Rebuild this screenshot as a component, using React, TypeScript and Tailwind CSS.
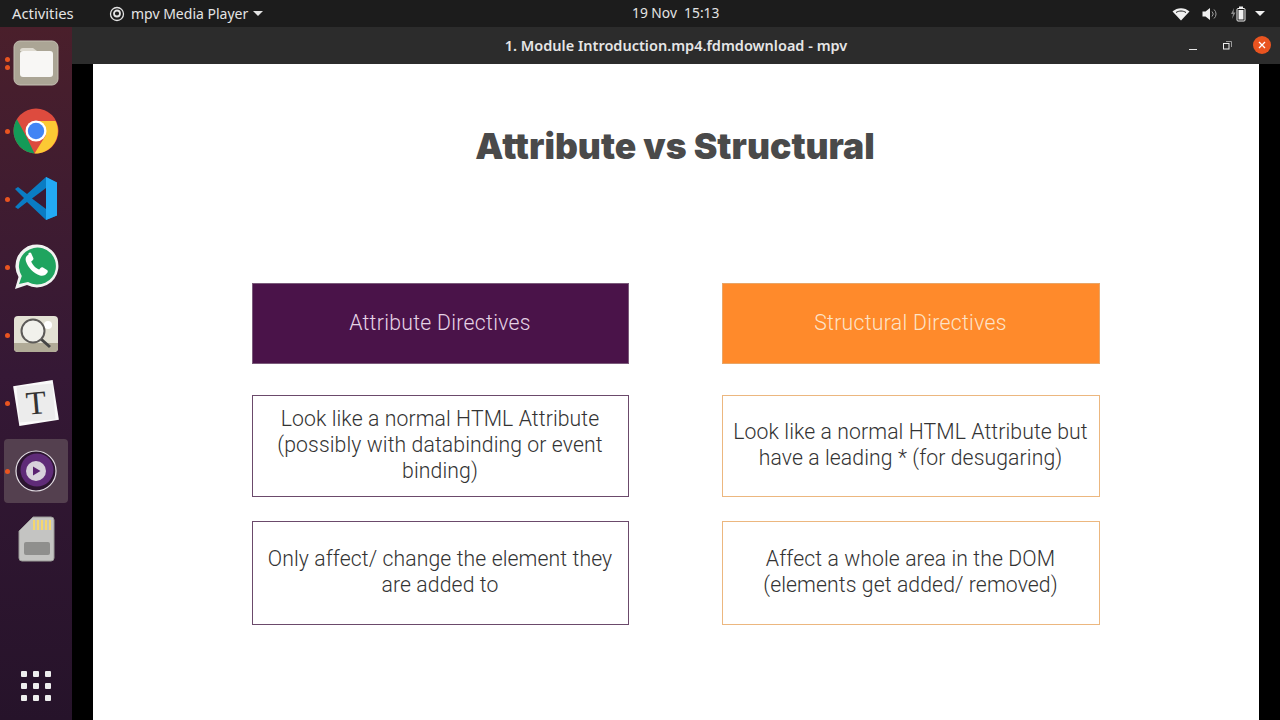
import { ReactNode } from 'react';

const FilesIcon = () => (
  <svg width="46" height="46" viewBox="0 0 46 46">
    <rect x="1" y="1" width="44" height="44" rx="6" fill="#aba595" stroke="#c4bfb2" />
    <path d="M7 11a3 3 0 0 1 3-3h10l4 3H7z" fill="#dedad0" />
    <path d="M7 14a3 3 0 0 1 3-3h27a3 3 0 0 1 3 3v20a3 3 0 0 1-3 3H10a3 3 0 0 1-3-3z" fill="#f8f7f5" />
  </svg>
);

const ChromeIcon = () => (
  <svg width="46" height="46" viewBox="0 0 46 46">
    <circle cx="23" cy="23" r="22.500" fill="#dd4b3e" />
    <path d="M4 11.500L14 30l7.500 15.400A22.500 22.500 0 0 1 3.500 11.800z" fill="#149b58" />
    <path d="M23 13h19.500A22.500 22.500 0 0 1 21.500 45.500L33 27z" fill="#fcc934" />
    <circle cx="23" cy="23" r="10.500" fill="#fff" />
    <circle cx="23" cy="23" r="8.200" fill="#4285f4" />
  </svg>
);

const VscodeIcon = () => (
  <svg width="46" height="46" viewBox="0 0 46 46">
    <path d="M33 1l11 5.500v33L33 44 14 26 5 33l-3-2 9-9-9-9 3-2 9 7z" fill="#0a7cc4" />
    <path d="M33 1l11 5.500v33L33 44z" fill="#23a9f4" />
    <path d="M33 12L19 22.500 33 33z" fill="#3a1a35" />
  </svg>
);

const WhatsappIcon = () => (
  <svg width="46" height="46" viewBox="0 0 46 46">
    <path d="M2 45l3.500-12A21.500 21.500 0 1 1 14 41z" fill="#f1f3f1" />
    <path d="M6 40l2.800-8A18.500 18.500 0 1 1 15 38z" fill="#1fa45f" />
    <path d="M15.500 10.500c-2.500 1.500-3.500 4-2.500 7 2 6 7.500 12 14 14 3 1 6-.5 7.500-3 .5-1 .3-2-.5-2.500l-4-2.500c-1-.5-1.800-.3-2.500.5l-1.300 1.500c-3.200-1-6.700-4.500-8-8l1.500-1.200c.8-.7 1-1.500.5-2.500l-2-4.500c-.5-.8-1.500-1-2.700 0z" fill="#fff" />
  </svg>
);

const ViewerIcon = () => (
  <svg width="46" height="46" viewBox="0 0 46 46">
    <rect x="1" y="4" width="44" height="36" rx="4" fill="#e3e1d4" />
    <path d="M1 31h44v5a4 4 0 0 1-4 4H5a4 4 0 0 1-4-4z" fill="#b1ab97" />
    <circle cx="35" cy="13" r="4" fill="#fff" />
    <circle cx="20" cy="19" r="11.500" fill="#f1f1ec" stroke="#5c5a58" strokeWidth="2" />
    <path d="M28.500 27.500L37 35" stroke="#454545" strokeWidth="3" />
  </svg>
);

const TyporaIcon = () => (
  <div className="relative w-[40px] h-[40px]">
    <div className="absolute inset-0 bg-[#fafafa] rotate-[-9deg]" />
    <div className="absolute inset-[2px] bg-[#ececec] rotate-[-5deg] flex items-center justify-center font-['Liberation_Serif',serif] text-[33px] leading-none text-[#333]">
      T
    </div>
  </div>
);

const MpvIcon = ({ size = 42 }: { size?: number }) => (
  <svg width={size} height={size} viewBox="0 0 42 42">
    <circle cx="21" cy="21" r="20" fill="#2c1630" stroke="#e2dde3" strokeWidth="1.200" />
    <circle cx="22" cy="20" r="16.500" fill="#5f2b78" />
    <circle cx="21" cy="21" r="10" fill="#d8d2dc" />
    <path d="M18 16.500l7.500 4.500-7.500 4.500z" fill="#5a2270" />
  </svg>
);

const SdCardIcon = () => (
  <svg width="38" height="46" viewBox="0 0 38 46">
    <path d="M16 1h18a3 3 0 0 1 3 3v38a3 3 0 0 1-3 3H5a3 3 0 0 1-3-3V15z" fill="#c4c4c2" stroke="#9b9b98" />
    <path d="M16 4h2v10h-2zm4 0h2v10h-2zm4 0h2v10h-2zm4 0h2v10h-2zm4 0h2v10h-2z" fill="#f5d76e" />
    <rect x="7" y="26" width="26" height="13" rx="2" fill="#8f8f8d" />
  </svg>
);

const dockItems: { icon: ReactNode; dots: number; active?: boolean }[] = [
  { icon: <FilesIcon />, dots: 2 },
  { icon: <ChromeIcon />, dots: 1 },
  { icon: <VscodeIcon />, dots: 1 },
  { icon: <WhatsappIcon />, dots: 1 },
  { icon: <ViewerIcon />, dots: 1 },
  { icon: <TyporaIcon />, dots: 1 },
  { icon: <MpvIcon />, dots: 1, active: true },
  { icon: <SdCardIcon />, dots: 0 },
];

const TopBar = () => (
  <div className="h-[27px] shrink-0 bg-[#1c1c1c] text-[#e4e4e4] text-[14px] flex items-center font-['Noto_Sans',sans-serif] relative">
    <span className="ml-[12px] w-[97px] text-[14.800px]">Activities</span>
    <svg width="16" height="16" viewBox="0 0 16 16" className="mr-[6px]">
      <circle cx="8" cy="8" r="6.500" fill="none" stroke="#e4e4e4" strokeWidth="1.300" />
      <circle cx="8" cy="7.500" r="3" fill="none" stroke="#e4e4e4" strokeWidth="1.800" />
    </svg>
    <span>mpv Media Player</span>
    <span className="ml-[5px] w-0 h-0 border-x-[5px] border-x-transparent border-t-[5px] border-t-[#e4e4e4]" />
    <span className="absolute left-[632px] text-[13.800px]">19 Nov&nbsp; 15:13</span>
    <div className="ml-auto mr-[15px] flex items-center">
      <svg width="18" height="14" viewBox="0 0 18 14" className="mr-[12px]">
        <path d="M0.500 4.500C5 0 13 0 17.500 4.500L9 13.500z" fill="#f0f0f0" />
        <path d="M4 5.500c3-2 7-2 10 0" fill="none" stroke="#1c1c1c" strokeWidth="1" />
      </svg>
      <svg width="16" height="14" viewBox="0 0 16 14" className="mr-[12px]">
        <path d="M0.500 4.500h3L8 1v12L3.500 9.500h-3z" fill="#f0f0f0" />
        <path d="M10 4.500a3.500 3.500 0 0 1 0 5M12 2.500a6 6 0 0 1 0 9" fill="none" stroke="#a0a0a0" strokeWidth="1" />
      </svg>
      <svg width="16" height="16" viewBox="0 0 16 16" className="mr-[9px]">
        <path d="M4 2L1 8h2l-1 5 3.500-6.500h-2z" fill="#8a8a8a" />
        <rect x="7" y="2.500" width="8" height="12.500" rx="1" fill="none" stroke="#f0f0f0" />
        <rect x="9" y="0.500" width="4" height="2" fill="#f0f0f0" />
        <rect x="8.500" y="4" width="5" height="9.500" fill="#f0f0f0" />
      </svg>
      <span className="w-0 h-0 border-x-[5px] border-x-transparent border-t-[5px] border-t-[#f0f0f0]" />
    </div>
  </div>
);

const Dock = () => (
  <div className="w-[72px] shrink-0 flex flex-col items-center pt-[2px] bg-gradient-to-b from-[#4a1f2b] via-[#351835] to-[#26132a]">
    {dockItems.map((item, i) => (
      <div key={i} className="relative w-[72px] h-[68px] flex items-center justify-center">
        {item.active && <div className="absolute left-[4px] top-[2px] w-[64px] h-[64px] rounded-[4px] bg-[#54404f]" />}
        <div className="absolute left-[5px] top-0 h-full flex flex-col justify-center gap-[3px]">
          {Array.from({ length: item.dots }).map((_, d) => (
            <span key={d} className="block w-[5px] h-[5px] rounded-full bg-[#e95420]" />
          ))}
        </div>
        <div className="relative">{item.icon}</div>
      </div>
    ))}
    <div className="mt-auto mb-[19px] grid grid-cols-3 gap-[6px]">
      {Array.from({ length: 9 }).map((_, i) => (
        <span key={i} className="block w-[6px] h-[6px] rounded-[1px] bg-[#eeeeee]" />
      ))}
    </div>
  </div>
);

const TitleBar = () => (
  <div className="h-[37px] shrink-0 bg-[#2c2c2c] flex items-center relative font-['Noto_Sans',sans-serif] text-[#e6e6e6]">
    <span className="w-full text-center text-[14.500px] font-semibold">
      1. Module Introduction.mp4.fdmdownload - mpv
    </span>
    <div className="absolute right-[9px] top-[9px] flex items-center">
      <span className="block w-[8px] h-[1px] bg-[#e6e6e6] mt-[8px] mr-[26px]" />
      <svg width="9" height="9" viewBox="0 0 9 9" className="mr-[21px]">
        <rect x="0.500" y="2.500" width="5.500" height="5.500" fill="none" stroke="#eeeeee" />
        <path d="M3 .500h5.500V6" fill="none" stroke="#9a9a9a" />
      </svg>
      <div className="w-[18px] h-[18px] rounded-full bg-[#e95420] flex items-center justify-center">
        <svg width="8" height="8" viewBox="0 0 8 8">
          <path d="M1 1l6 6M7 1L1 7" stroke="#fff" strokeWidth="1.300" />
        </svg>
      </div>
    </div>
  </div>
);

const Box = ({ children, className }: { children: ReactNode; className: string }) => (
  <div className={`flex items-center justify-center text-center px-[8px] pb-[2px] ${className}`}>
    <p>{children}</p>
  </div>
);

const Slide = () => (
  <div className="flex-1 bg-black px-[21px] min-h-0">
    <div className="h-full bg-white flex flex-col items-center font-['Roboto',sans-serif]">
      <h1 className="mt-[61px] text-[35.500px] leading-[44px] font-black text-[#4a4a4a] font-['Inter',sans-serif] pr-[2px]">
        Attribute vs Structural
      </h1>
      <div className="mt-[114px] grid grid-cols-[377px_378px] grid-rows-[81px_102px_104px] gap-x-[93px] ml-[-1px] text-[21.200px] leading-[26px] font-light tracking-[0.1px] text-[#333333]">
        <Box className="bg-[#4a1349] border border-[#7a5a7a] text-[#e6d3e6] tracking-[0.3px]">Attribute Directives</Box>
        <Box className="bg-[#ff8a2b] border border-[#e9a566] text-[#fde3c8] tracking-[0.3px]">Structural Directives</Box>
        <Box className="mt-[31px] h-[102px] border border-[#6b4a6b]">
          Look like a normal HTML Attribute (possibly with databinding or event binding)
        </Box>
        <Box className="mt-[31px] h-[102px] border border-[#ecb77f]">
          Look like a normal HTML Attribute but have a leading * (for desugaring)
        </Box>
        <Box className="mt-[55px] h-[104px] border border-[#6b4a6b]">Only affect/ change the element they are added to</Box>
        <Box className="mt-[55px] h-[104px] border border-[#ecb77f]">
          Affect a whole area in the DOM (elements get added/ removed)
        </Box>
      </div>
    </div>
  </div>
);

export default function App() {
  return (
    <div className="w-[1280px] h-[720px] overflow-hidden flex flex-col bg-black">
      <TopBar />
      <div className="flex-1 flex min-h-0">
        <Dock />
        <div className="flex-1 flex flex-col min-w-0">
          <TitleBar />
          <Slide />
        </div>
      </div>
    </div>
  );
}
